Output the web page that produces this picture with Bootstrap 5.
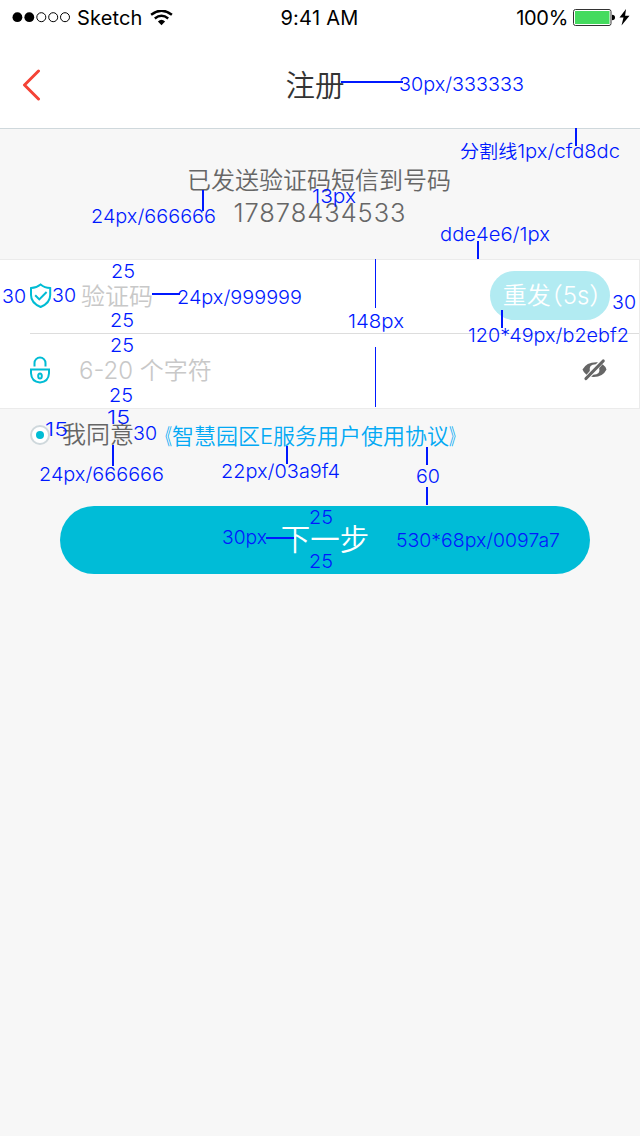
<!DOCTYPE html>
<html lang="zh-CN">
<head>
<meta charset="utf-8">
<meta name="viewport" content="width=device-width, initial-scale=1">
<title>注册</title>
<link rel="stylesheet" href="https://cdn.jsdelivr.net/npm/bootstrap@5.3.0/dist/css/bootstrap.min.css">
<style>
body{background:#f7f7f7;font-family:Inter,"Noto Sans CJK SC",sans-serif;font-weight:350;color:#666;line-height:1}
.screen{width:640px;height:1136px}
.status{height:40px;font-size:20px;font-weight:400;color:#000;padding:0 10px 4px 12px}
.titlebar{height:89px;padding:2px 22px 0;border-bottom:1px solid #cfd8dc}
.titlebar h1{font-size:29.5px;font-weight:350;color:#333;line-height:1;padding-top:2px}
.status .side{width:202px}
.notice{height:130px;padding-top:40px;font-size:24px}
.notice div:first-child{margin-left:-2px}
.phone{font-size:25.5px;margin-top:7px;letter-spacing:.95px;font-weight:300}
.fields{height:150px;border:1px solid #ebebeb;border-left:0}
.cell-row{height:73px;margin-left:30px;padding-right:29px;padding-bottom:1px}
.cell-row + .cell-row{height:75px;border-top:1px solid #ddd;padding-bottom:3px}
.hint{font-size:24px;color:#c8c8c8;padding-top:2px}
.resend{width:120px;height:49px;background:#b2ebf2;color:#fff;font-size:24px;font-weight:350;margin-top:-1px}
.resend span{font-feature-settings:"halt"}
.agree{height:53px;padding-left:30px;padding-bottom:2px;font-size:24px}
.agree a{color:#03a9f4;font-size:22px;text-decoration:none;padding-top:2px}
.agree b{display:inline-block;font-weight:350;transform:scaleX(.62);transform-origin:100% 50%}
.agree b.end{transform-origin:0 50%}
.dot{width:20px;height:20px;border:2px solid #cfd8dc;background:#fff}
.dot i{width:8px;height:8px;background:#00bcd4}
.next{width:530px;height:68px;background:#00bcd7;color:#fff;font-size:29.5px;font-weight:350;margin:44px 0 0 60px;padding-bottom:2px}
.redline{pointer-events:none;font-size:19px;font-weight:300;fill:#0019ff;stroke:none;font-feature-settings:"calt" 0}
.redline path{stroke:#0019ff;stroke-width:2;fill:none}
.redline .thin{stroke-width:1}
</style>
</head>
<body>
<main class="screen position-relative overflow-hidden">
<header class="bg-white">
  <div class="status d-flex align-items-center justify-content-between">
    <div class="side d-flex align-items-center">
      <svg width="60" height="12" viewBox="0 0 60 12" fill="none" stroke="#000"><g fill="#000" stroke="none"><circle cx="5.4" cy="5.2" r="4.9"/><circle cx="17.3" cy="5.2" r="4.9"/></g><circle cx="29.3" cy="5.2" r="4.5"/><circle cx="41.2" cy="5.2" r="4.5"/><circle cx="53" cy="5.2" r="4.5"/></svg>
      <span style="margin-left:5px;letter-spacing:.15px">Sketch</span>
      <svg style="margin-left:7px" width="24" height="17" viewBox="0 0 24 17" fill="none" stroke="#000" stroke-width="2.4"><path d="M1.1 4.7Q11.5-3.3 21.9 4.7M4.8 8.5Q11.5 3 18.2 8.5"/><path d="M7.9 11.4Q11.5 8.2 15.1 11.4L11.5 15.2Z" fill="#000" stroke="none"/></svg>
    </div>
    <span style="letter-spacing:.25px;margin-left:-3px">9:41 AM</span>
    <div class="side d-flex align-items-center justify-content-end">
      <span style="letter-spacing:-.3px">100%</span>
      <svg class="ms-1" width="58" height="20" viewBox="0 0 58 20"><rect x="1.5" y="1.5" width="37.5" height="16" rx="2" fill="#fff" stroke="#333"/><rect x="3" y="3" width="34.5" height="13" fill="#44db5e"/><path d="M40 6.7Q43 6.7 43 9.5T40 12.3Z"/><path d="M54 1L47.5 9.5H51.5L49.5 17.5L57.5 7.8H53.1Z"/></svg>
    </div>
  </div>
  <nav class="titlebar d-flex align-items-center">
    <svg width="20" height="32" viewBox="0 0 20 32" fill="none" stroke="#f44336" stroke-width="3" stroke-linecap="round" stroke-linejoin="round"><path d="M16.5 2L2.5 16L16.5 30"/></svg>
    <h1 class="mb-0 flex-fill text-center">注册</h1>
    <span style="width:30px"></span>
  </nav>
</header>
<section class="notice text-center">
  <div>已发送验证码短信到号码</div>
  <div class="phone">17878434533</div>
</section>
<section class="fields bg-white">
  <div class="cell-row d-flex align-items-center">
    <svg width="51" height="26" viewBox="0 0 51 26" fill="none" stroke="#00bcd4" stroke-width="2"><path d="M10.6 1.5Q6.6 4.9 1 5.1V12Q1 20 10.6 24Q20.2 20 20.2 12V5.1Q14.6 4.9 10.6 1.5Z"/><path d="M5.2 12.2L9.3 16.4L16.6 9"/></svg>
    <span class="hint flex-fill">验证码</span>
    <button class="resend btn rounded-pill border-0 py-0 ps-1 pe-0 text-nowrap"><span>重发（5s）</span></button>
  </div>
  <div class="cell-row d-flex align-items-center">
    <svg width="49" height="28" viewBox="0 0 49 28" fill="none" stroke="#00bcd4" stroke-width="2"><path d="M4.5 10.5V7A5.5 5.5 0 0 1 15.5 7V10.5M1 13.5H19V17.3Q18.5 26 10 26.5Q1.5 26 1 17.3Z"/><ellipse cx="10" cy="20" rx="1.8" ry="2.5"/></svg>
    <span class="hint flex-fill">6-20 个字符</span>
    <svg style="margin-right:3px" width="25" height="24" viewBox="0 0 25 24" fill="none" stroke="#666"><path fill="#666" stroke="none" d="M.5 11.5Q4.5 3.6 16 4.2L13.8 6.2Q6.5 6.5 7.8 13L4.5 16.8Q1.5 14.5 .5 11.5ZM24.5 11.5Q20.5 19.9 9.2 18.8L11.3 16.7Q18.8 16.6 17.2 10L20.6 6.3Q23.5 8.4 24.5 11.5Z"/><path stroke-width="3.2" stroke-linecap="round" d="M4 20.5L21.2 3"/></svg>
  </div>
</section>
<section class="agree d-flex align-items-center">
  <span class="dot rounded-circle d-flex align-items-center justify-content-center"><i class="rounded-circle"></i></span>
  <span style="margin-left:12px;padding-top:1px">我同意</span>
  <a href="#" style="margin-left:16px"><b>《</b>智慧园区E服务用户使用协议<b class="end">》</b></a>
</section>
<button class="next btn rounded-pill border-0 d-block pt-0">下一步</button>

<svg class="redline position-absolute top-0 start-0" width="640" height="1136" viewBox="0 0 640 1136">
  <path d="M341 82H403M576 128V146M203 190V211M478 241V259M152 294H180M502 310V328M113 445V466M287 446V464M427 447V465M427 487V505M266 538H294"/>
  <path class="thin" d="M375.5 259V308M375.5 347V407"/>
  <text x="399" y="91" textLength="125" lengthAdjust="spacingAndGlyphs">30px/333333</text>
  <text x="460" y="158" textLength="160" lengthAdjust="spacingAndGlyphs"><tspan font-size="18" font-weight="350">分割线</tspan>1px/cfd8dc</text>
  <text x="91" y="223" textLength="125" lengthAdjust="spacingAndGlyphs">24px/666666</text>
  <text x="312" y="203" textLength="44" lengthAdjust="spacingAndGlyphs">13px</text>
  <text x="440" y="241" textLength="110" lengthAdjust="spacingAndGlyphs">dde4e6/1px</text>
  <text x="111" y="278" textLength="24" lengthAdjust="spacingAndGlyphs">25</text>
  <text x="2" y="303" textLength="24" lengthAdjust="spacingAndGlyphs">30</text>
  <text x="52" y="302" textLength="24" lengthAdjust="spacingAndGlyphs">30</text>
  <text x="177" y="304" textLength="125" lengthAdjust="spacingAndGlyphs">24px/999999</text>
  <text x="110" y="327" textLength="24" lengthAdjust="spacingAndGlyphs">25</text>
  <text x="348" y="328" textLength="56" lengthAdjust="spacingAndGlyphs">148px</text>
  <text x="612" y="309" textLength="24" lengthAdjust="spacingAndGlyphs">30</text>
  <text x="468" y="342" textLength="161" lengthAdjust="spacingAndGlyphs">120*49px/b2ebf2</text>
  <text x="110" y="352" textLength="24" lengthAdjust="spacingAndGlyphs">25</text>
  <text x="109" y="402" textLength="24" lengthAdjust="spacingAndGlyphs">25</text>
  <text x="107" y="424" textLength="23" lengthAdjust="spacingAndGlyphs">15</text>
  <text x="45" y="436" textLength="23" lengthAdjust="spacingAndGlyphs">15</text>
  <text x="133" y="440" textLength="24" lengthAdjust="spacingAndGlyphs">30</text>
  <text x="39" y="481" textLength="125" lengthAdjust="spacingAndGlyphs">24px/666666</text>
  <text x="221" y="478" textLength="119" lengthAdjust="spacingAndGlyphs">22px/03a9f4</text>
  <text x="416" y="483" textLength="24" lengthAdjust="spacingAndGlyphs">60</text>
  <text x="309" y="524" textLength="24" lengthAdjust="spacingAndGlyphs">25</text>
  <text x="309" y="568" textLength="24" lengthAdjust="spacingAndGlyphs">25</text>
  <text x="222" y="544" textLength="45" lengthAdjust="spacingAndGlyphs">30px</text>
  <text x="396" y="547" textLength="164" lengthAdjust="spacingAndGlyphs">530*68px/0097a7</text>
</svg>
</main>
<script src="https://cdn.jsdelivr.net/npm/bootstrap@5.3.0/dist/js/bootstrap.bundle.min.js"></script>
</body>
</html>
